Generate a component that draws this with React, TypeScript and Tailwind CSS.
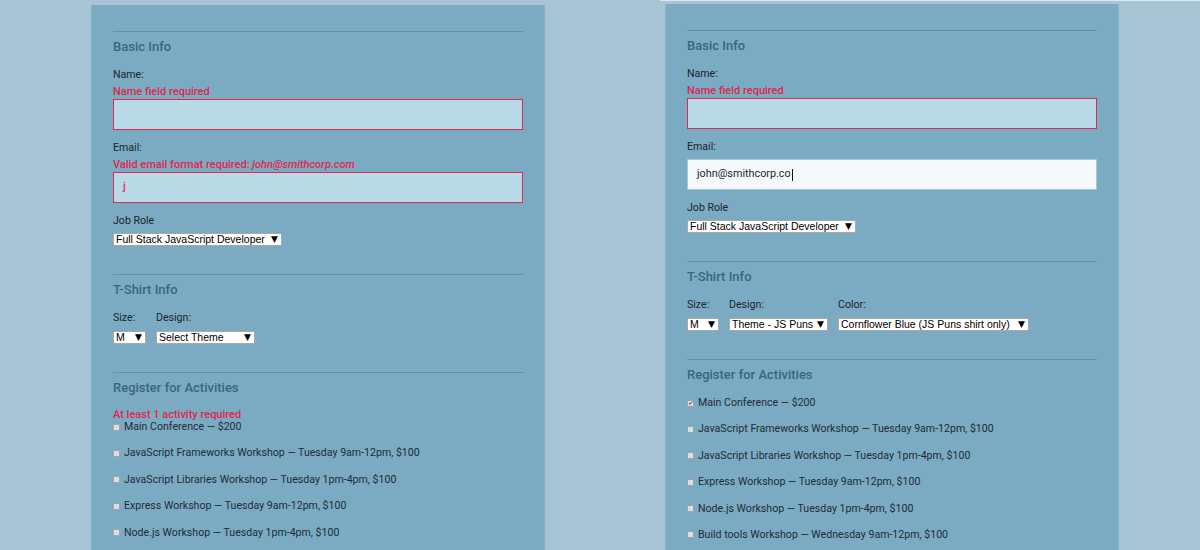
import React from 'react';

const activitiesLeft = [
  'Main Conference — $200',
  'JavaScript Frameworks Workshop — Tuesday 9am-12pm, $100',
  'JavaScript Libraries Workshop — Tuesday 1pm-4pm, $100',
  'Express Workshop — Tuesday 9am-12pm, $100',
  'Node.js Workshop — Tuesday 1pm-4pm, $100',
];

const activitiesRight = [...activitiesLeft, 'Build tools Workshop — Wednesday 9am-12pm, $100'];

// fake native select, drawn small like the screenshot
function FakeSelect({ text, width }: { text: string; width: string }) {
  return (
    <div
      className={`flex h-[13px] items-center justify-between border border-[#a8a8a8] bg-white pl-[2px] pr-[3px] font-['Liberation_Sans',Arial,sans-serif] text-[10.5px] leading-none text-black ${width}`}
    >
      <span className="whitespace-nowrap">{text}</span>
      <span className="font-['DejaVu_Sans',sans-serif] text-[9px] leading-none">▼</span>
    </div>
  );
}

function SectionHead({ title }: { title: string }) {
  return (
    <>
      <div className="h-px bg-[#5f90ac]" />
      <h2 className="mt-[7px] mb-[13px] text-[13px] font-medium leading-[16px] text-[#3b6583]">{title}</h2>
    </>
  );
}

function Label({ children }: { children: React.ReactNode }) {
  return <div className="text-[10.6px] leading-[14px] text-[#1a242d]">{children}</div>;
}

function ErrorText({ children, className = '' }: { children: React.ReactNode; className?: string }) {
  return <div className={`text-[11px] font-medium text-[#e0264e] ${className}`}>{children}</div>;
}

function Checkbox({ checked }: { checked?: boolean }) {
  return (
    <span className="flex h-[7px] w-[7px] shrink-0 items-center justify-center rounded-[1px] border border-[#a3a3a3] bg-[#dedede]">
      {checked && (
        <svg viewBox="0 0 8 8" className="h-[6px] w-[6px]">
          <path d="M1.2 4.2 L3.1 6 L6.8 1.6" fill="none" stroke="#333" strokeWidth="1.4" />
        </svg>
      )}
    </span>
  );
}

function Activities({ items, checkedFirst }: { items: string[]; checkedFirst?: boolean }) {
  return (
    <div className="flex flex-col gap-[12.4px]">
      {items.map((a, i) => (
        <label key={a} className="flex items-center gap-[4px] text-[10.6px] leading-[14px] text-[#1f2c38]">
          <Checkbox checked={checkedFirst && i === 0} />
          <span className="whitespace-nowrap">{a}</span>
        </label>
      ))}
    </div>
  );
}

function LeftForm() {
  return (
    <div className="mt-[5px] h-[545px] w-[454px] shrink-0 border-x border-[#84b2c7] bg-[#7aabc2] px-[21px] pt-[26px]">
      <SectionHead title="Basic Info" />
      <Label>Name:</Label>
      <ErrorText className="mt-[4px] leading-[12px]">Name field required</ErrorText>
      <div className="mt-[1px] h-[31px] border border-[#dc2a50] bg-[#b9d9e6]" />

      <div className="mt-[11px]">
        <Label>Email:</Label>
      </div>
      <ErrorText className="mt-[4px] leading-[12px]">
        Valid email format required: <i>john@smithcorp.com</i>
      </ErrorText>
      <div className="mt-[1px] flex h-[31px] items-center border border-[#dc2a50] bg-[#b9d9e6] pl-[9px] text-[11px] font-medium text-[#d8355e]">
        j
      </div>

      <div className="mt-[11px]">
        <Label>Job Role</Label>
      </div>
      <div className="mt-[5px] mb-[28px] flex">
        <FakeSelect text="Full Stack JavaScript Developer" width="w-[169px]" />
      </div>

      <SectionHead title="T-Shirt Info" />
      <div className="mb-[28px] flex gap-[10px]">
        <div>
          <Label>Size:</Label>
          <div className="mt-[6px]">
            <FakeSelect text="M" width="w-[33px]" />
          </div>
        </div>
        <div>
          <Label>Design:</Label>
          <div className="mt-[6px]">
            <FakeSelect text="Select Theme" width="w-[99px]" />
          </div>
        </div>
      </div>

      <SectionHead title="Register for Activities" />
      <ErrorText className="mt-[4px] leading-[11px]">At least 1 activity required</ErrorText>
      <Activities items={activitiesLeft} />
    </div>
  );
}

function RightForm() {
  return (
    <div className="mt-[3px] ml-[5px] h-[546px] w-[454px] shrink-0 border-x border-[#84b2c7] bg-[#7aabc2] px-[21px] pt-[26px]">
      <SectionHead title="Basic Info" />
      <Label>Name:</Label>
      <ErrorText className="mt-[4px] leading-[12px]">Name field required</ErrorText>
      <div className="mt-[1px] h-[31px] border border-[#dc2a50] bg-[#b9d9e6]" />

      <div className="mt-[11px]">
        <Label>Email:</Label>
      </div>
      <div className="mt-[5px] flex h-[31px] items-center border border-[#a9c8d8] bg-[#f5f9fc] pl-[9px] text-[10.8px] text-[#1c2731]">
        john@smithcorp.co
        <span className="ml-px h-[12px] w-px bg-[#111]" />
      </div>

      <div className="mt-[11px]">
        <Label>Job Role</Label>
      </div>
      <div className="mt-[5px] mb-[28px] flex">
        <FakeSelect text="Full Stack JavaScript Developer" width="w-[169px]" />
      </div>

      <SectionHead title="T-Shirt Info" />
      <div className="mb-[28px] flex gap-[10px]">
        <div>
          <Label>Size:</Label>
          <div className="mt-[6px]">
            <FakeSelect text="M" width="w-[32px]" />
          </div>
        </div>
        <div>
          <Label>Design:</Label>
          <div className="mt-[6px]">
            <FakeSelect text="Theme - JS Puns" width="w-[99px]" />
          </div>
        </div>
        <div>
          <Label>Color:</Label>
          <div className="mt-[6px]">
            <FakeSelect text="Cornflower Blue (JS Puns shirt only)" width="w-[191px]" />
          </div>
        </div>
      </div>

      <SectionHead title="Register for Activities" />
      <Activities items={activitiesRight} checkedFirst />
    </div>
  );
}

export default function App() {
  return (
    <div className="flex h-[550px] w-[1200px] overflow-hidden bg-[#a7c4d5] pl-[91px] font-[Roboto,sans-serif]">
      <LeftForm />
      <div className="ml-[115px] flex-1">
        <div className="h-px bg-[#dde9ef]" />
        <RightForm />
      </div>
    </div>
  );
}
